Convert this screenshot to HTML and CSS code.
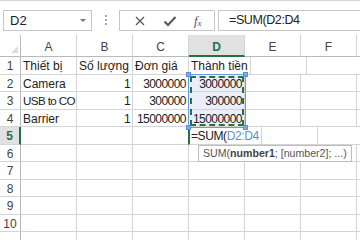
FILE: index.html
```html
<!DOCTYPE html>
<html lang="vi">
<head>
    <meta charset="UTF-8">
    <title>Bảng tính</title>
    <link rel="stylesheet" href="styles.css">
</head>
<body>
    <!-- Formula bar -->
    <div class="toolbar">
        <div class="name-box">
            <span>D2</span>
            <span class="arrow"></span>
        </div>
        <div class="grip"><i></i><i></i><i></i></div>
        <div class="fx-buttons">
            <svg class="btn-icon" width="12" height="12" viewBox="0 0 12 12">
                <path d="M2 2 L10 10 M10 2 L2 10" stroke="#5a5a5a" stroke-width="1.3" fill="none"/>
            </svg>
            <svg class="btn-icon" width="14" height="12" viewBox="0 0 14 12">
                <path d="M1.5 6.5 L5 10 L12.5 2" stroke="#5a5a5a" stroke-width="2.2" fill="none"/>
            </svg>
            <span class="fx">f<sub>x</sub></span>
        </div>
        <div class="formula">=SUM(D2:D4</div>
    </div>

    <!-- Sheet -->
    <div class="sheet">
        <div class="row head">
            <div class="rh corner"><span class="tri"></span></div>
            <div class="c">A</div>
            <div class="c">B</div>
            <div class="c">C</div>
            <div class="c active">D</div>
            <div class="c">E</div>
            <div class="c">F</div>
            <div class="c"></div>
        </div>
        <div class="row">
            <div class="rh">1</div>
            <div class="c">Thiết bị</div>
            <div class="c">Số lượng</div>
            <div class="c">Đơn giá</div>
            <div class="c spill">Thành tiền</div>
            <div class="c"></div>
            <div class="c"></div>
            <div class="c"></div>
        </div>
        <div class="row">
            <div class="rh">2</div>
            <div class="c">Camera</div>
            <div class="c num">1</div>
            <div class="c num">3000000</div>
            <div class="c num hl">3000000</div>
            <div class="c"></div>
            <div class="c"></div>
            <div class="c"></div>
        </div>
        <div class="row">
            <div class="rh">3</div>
            <div class="c tight">USB to CO</div>
            <div class="c num">1</div>
            <div class="c num">300000</div>
            <div class="c num hl">300000</div>
            <div class="c"></div>
            <div class="c"></div>
            <div class="c"></div>
        </div>
        <div class="row">
            <div class="rh">4</div>
            <div class="c">Barrier</div>
            <div class="c num">1</div>
            <div class="c num">15000000</div>
            <div class="c num hl">15000000</div>
            <div class="c"></div>
            <div class="c"></div>
            <div class="c"></div>
        </div>
        <div class="row">
            <div class="rh active">5</div>
            <div class="c"></div>
            <div class="c"></div>
            <div class="c"></div>
            <div class="c spill editing">=SUM(<span class="ref">D2:D4</span></div>
            <div class="c"></div>
            <div class="c"></div>
            <div class="c"></div>
        </div>
        <div class="row">
            <div class="rh">6</div>
            <div class="c"></div><div class="c"></div><div class="c"></div><div class="c"></div>
            <div class="c"></div><div class="c"></div><div class="c"></div>
        </div>
        <div class="row">
            <div class="rh">7</div>
            <div class="c"></div><div class="c"></div><div class="c"></div><div class="c"></div>
            <div class="c"></div><div class="c"></div><div class="c"></div>
        </div>
        <div class="row">
            <div class="rh">8</div>
            <div class="c"></div><div class="c"></div><div class="c"></div><div class="c"></div>
            <div class="c"></div><div class="c"></div><div class="c"></div>
        </div>
        <div class="row">
            <div class="rh">9</div>
            <div class="c"></div><div class="c"></div><div class="c"></div><div class="c"></div>
            <div class="c"></div><div class="c"></div><div class="c"></div>
        </div>
        <div class="row">
            <div class="rh">10</div>
            <div class="c"></div><div class="c"></div><div class="c"></div><div class="c"></div>
            <div class="c"></div><div class="c"></div><div class="c"></div>
        </div>
        <div class="row">
            <div class="rh"></div>
            <div class="c"></div><div class="c"></div><div class="c"></div><div class="c"></div>
            <div class="c"></div><div class="c"></div><div class="c"></div>
        </div>

        <!-- Referenced range D2:D4 -->
        <div class="range">
            <div class="ants"></div>
            <span class="handle tl"></span>
            <span class="handle tr"></span>
            <span class="handle bl"></span>
            <span class="handle br"></span>
        </div>

        <!-- Function tooltip -->
        <div class="tip">SUM(<b>number1</b>; [number2]; ...)</div>
    </div>
</body>
</html>
```

FILE: styles.css
```css
* {
    margin: 0;
    padding: 0;
    box-sizing: border-box;
}

body {
    width: 360px;
    height: 240px;
    overflow: hidden;
    background-color: white;
    font-family: "Liberation Sans", Arial, sans-serif;
    color: #222;
}

/* Formula bar */
.toolbar {
    display: flex;
    align-items: flex-start;
    height: 35px;
    padding-top: 9px;
    border-top: 1px solid #d8d8d8;
}

.name-box {
    display: flex;
    align-items: center;
    justify-content: space-between;
    width: 89px;
    height: 21px;
    margin-left: 3px;
    padding: 0 5px 0 6px;
    border: 1px solid #c6c6c6;
    font-size: 13px;
}

.arrow {
    width: 0;
    height: 0;
    border-left: 3px solid transparent;
    border-right: 3px solid transparent;
    border-top: 3px solid #777;
}

.grip {
    display: flex;
    flex-direction: column;
    align-items: center;
    gap: 2px;
    width: 27px;
    padding-top: 5px;
}

.grip i {
    width: 2px;
    height: 2px;
    background-color: #a6a6a6;
}

.fx-buttons {
    display: flex;
    align-items: center;
    justify-content: space-around;
    width: 96px;
    height: 21px;
    padding: 0 4px 0 6px;
    border: 1px solid #c6c6c6;
}

.fx {
    font-family: "Liberation Serif", serif;
    font-style: italic;
    font-size: 13px;
    color: #555;
}

.fx sub {
    font-size: 9px;
    vertical-align: -1px;
}

.formula {
    flex: 1;
    height: 21px;
    margin-left: 3px;
    padding-left: 10px;
    border: 1px solid #c6c6c6;
    border-right: none;
    font-size: 12.5px;
    letter-spacing: -0.4px;
    line-height: 19px;
}

/* Sheet grid */
.sheet {
    position: relative;
    font-size: 12px;
}

.row {
    display: flex;
    height: 17.5px;
}

.row.head {
    height: 22px;
}

.rh {
    flex: 0 0 21px;
    border-right: 1px solid #b9b9b9;
    border-bottom: 1px solid #d4d4d4;
    text-align: center;
    line-height: 18px;
    color: #444;
}

.c {
    flex: 0 0 56px;
    padding: 0 2px;
    border-right: 1px solid #d4d4d4;
    border-bottom: 1px solid #d4d4d4;
    white-space: nowrap;
    overflow: hidden;
    line-height: 18px;
}

.c:last-child {
    flex: 1;
}

.c.tight {
    padding-right: 0;
    font-size: 11.6px;
    letter-spacing: -0.6px;
}

.head .c,
.head .rh {
    border-bottom: 1px solid #b9b9b9;
    text-align: center;
    line-height: 24px;
    color: #444;
}

.corner {
    position: relative;
}

.tri {
    position: absolute;
    right: 2px;
    bottom: 3px;
    width: 0;
    height: 0;
    border-left: 7px solid transparent;
    border-bottom: 7px solid #dcdcdc;
}

.head .c.active {
    background-color: #e1e1e1;
    border-bottom: 2px solid #217346;
    color: #217346;
    font-weight: bold;
}

.rh.active {
    background-color: #e1e1e1;
    border-right: 2px solid #217346;
    color: #217346;
    font-weight: bold;
}

.num {
    text-align: right;
    letter-spacing: -0.55px;
}

.hl {
    background-color: #e9eef8;
}

.spill {
    overflow: visible;
}

.editing {
    border-left: 2px solid #217346;
    margin-left: -1px;
    padding-left: 1px;
    letter-spacing: -0.4px;
}

.ref {
    color: #5b8fd6;
}

/* Range reference box */
.range {
    position: absolute;
    left: 188px;
    top: 39px;
    width: 58px;
    height: 54px;
    border: 1px solid #6a9be0;
}

.ants {
    position: absolute;
    inset: 1px;
    border: 2px dashed #2b6e44;
}

.handle {
    position: absolute;
    width: 5px;
    height: 5px;
    background-color: #7fa8e8;
    border: 1px solid #5b8fd6;
}

.handle.tl { left: -3px; top: -3px; }
.handle.tr { right: -3px; top: -3px; }
.handle.bl { left: -3px; bottom: -3px; }
.handle.br { right: -3px; bottom: -3px; }

/* Tooltip */
.tip {
    position: absolute;
    left: 198px;
    top: 110px;
    height: 17px;
    padding: 0 4px;
    background-color: white;
    border: 1px solid #bcbcbc;
    font-size: 10.6px;
    line-height: 15px;
    color: #555;
    white-space: nowrap;
}

.tip b {
    color: #444;
}
```
